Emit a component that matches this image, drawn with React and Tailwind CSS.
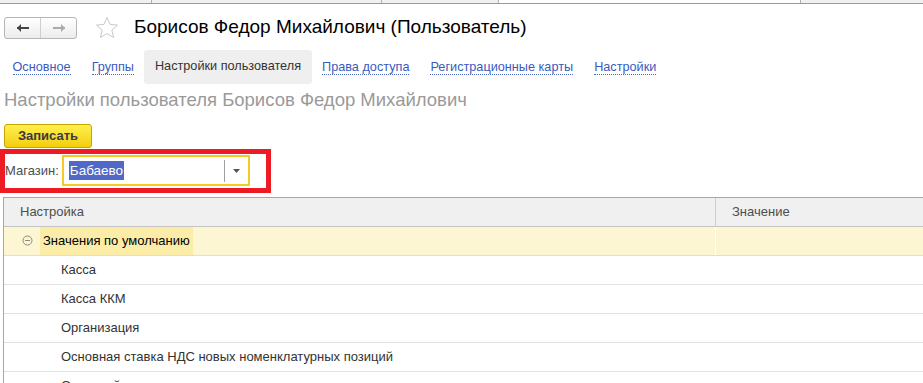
import { useState } from "react";

const tabs = [
  { label: "Основное" },
  { label: "Группы" },
  { label: "Настройки пользователя", active: true },
  { label: "Права доступа" },
  { label: "Регистрационные карты" },
  { label: "Настройки" },
];

const rows = ["Касса", "Касса ККМ", "Организация", "Основная ставка НДС новых номенклатурных позиций", "Основной склад"];

function NavButtons() {
  return (
    <div className="flex h-[22px] w-[73px] rounded-[3px] border border-[#b5b5b5] bg-gradient-to-b from-white to-[#ececec]">
      <button className="flex flex-1 items-center justify-center border-r border-[#cfcfcf]">
        <svg width="14" height="10" viewBox="0 0 14 10">
          <path d="M1 5h12" stroke="#444" strokeWidth="2" />
          <path d="M1 5l4-4v8z" fill="#444" />
        </svg>
      </button>
      <button className="flex flex-1 items-center justify-center">
        <svg width="14" height="10" viewBox="0 0 14 10">
          <path d="M1 5h12" stroke="#aaa" strokeWidth="2" />
          <path d="M13 5l-4-4v8z" fill="#aaa" />
        </svg>
      </button>
    </div>
  );
}

function Star() {
  return (
    <svg width="24" height="23" viewBox="0 0 24 23">
      <path
        d="M12 1.5l3.1 6.9 7.4.7-5.6 5 1.7 7.4L12 17.6l-6.6 3.9 1.7-7.4-5.6-5 7.4-.7z"
        fill="none"
        stroke="#c8c8c8"
        strokeWidth="1"
        strokeLinejoin="round"
      />
    </svg>
  );
}

function App() {
  const [store] = useState("Бабаево");

  return (
    <div className="h-[383px] w-[923px] overflow-hidden bg-white font-['Liberation_Sans',Arial,sans-serif]">
      {/* top strip */}
      <div className="flex h-[4px] border-b border-[#9a9a9a] bg-[#f0f0f0]">
        <div className="w-[152px] border-r border-[#b0b0b0]" />
        <div className="w-[230px] border-r border-[#b0b0b0]" />
        <div className="w-[117px] border-r border-[#b0b0b0]" />
        <div className="w-[302px] border-r border-[#b0b0b0] bg-white" />
        <div className="flex-1" />
      </div>

      {/* header */}
      <div className="flex h-[42px] items-center pl-[4px] pt-[5px]">
        <NavButtons />
        <div className="ml-[18px]">
          <Star />
        </div>
        <h1 className="ml-[15px] text-[19px] text-black">Борисов Федор Михайлович (Пользователь)</h1>
      </div>

      {/* tabs */}
      <div className="mt-[4px] flex h-[34px] items-stretch pl-[2px] text-[12.7px]">
        {tabs.map((t) =>
          t.active ? (
            <div key={t.label} className="flex items-center rounded-[3px] bg-[#efefef] px-[10.5px] text-[#333]">
              {t.label}
            </div>
          ) : (
            <div key={t.label} className="flex items-center px-[10.5px]">
              <span className="border-b border-dotted border-[#4a67c6] leading-[14px] text-[#3a5bbd]">{t.label}</span>
            </div>
          )
        )}
      </div>

      {/* subtitle */}
      <div className="mt-[5px] pl-[4px] text-[18.5px] leading-[21px] text-[#9a9a9a]">
        Настройки пользователя Борисов Федор Михайлович
      </div>

      {/* toolbar */}
      <div className="mt-[13px] pl-[4px]">
        <button className="h-[24px] w-[88px] rounded-[3px] border border-[#c7a600] bg-gradient-to-b from-[#fff04a] to-[#f3ce00] text-[13px] font-bold text-[#3a3a3a]">
          Записать
        </button>
      </div>

      {/* store selector */}
      <div className="mb-[4px] mt-[1px] flex h-[44px] w-[271px] items-center border-[5px] border-[#ed1c24]">
        <span className="text-[13px] text-[#4d4d4d]">Магазин:</span>
        <div className="ml-[3px] flex h-[31px] w-[188px] items-center border-2 border-[#f7c923] bg-white pl-[5px]">
          <span className="bg-[#5169c6] px-[1px] text-[13.5px] leading-[19px] text-white">{store}</span>
          <div className="ml-auto flex h-[22px] items-center border-l border-[#a0a0a0] px-[8px]">
            <svg width="7" height="4" viewBox="0 0 7 4">
              <path d="M0 0h7L3.5 4z" fill="#555" />
            </svg>
          </div>
        </div>
      </div>

      {/* table */}
      <div className="ml-[3px] border-l border-[#a8a8a8] text-[13px]">
        <div className="flex h-[30px] border-y border-[#c4c4c4] border-t-[#a8a8a8] bg-[#f0f0f0] text-[#4d4d4d]">
          <div className="flex w-[712px] items-center border-r border-[#cfcfcf] pl-[16px]">Настройка</div>
          <div className="flex flex-1 items-center pl-[16px]">Значение</div>
        </div>
        <div className="flex h-[29px] border-b border-[#dedede] bg-[#fcf6d3] text-black">
          <div className="flex w-[712px] items-center border-r border-white pl-[18px]">
            <svg width="11" height="11" viewBox="0 0 11 11" className="mr-[7px]">
              <circle cx="5.5" cy="5.5" r="4.5" fill="none" stroke="#8a8a8a" />
              <path d="M3 5.5h5" stroke="#8a8a8a" />
            </svg>
            <span className="flex h-full items-center bg-[#fbeda8] px-[3px]">Значения по умолчанию</span>
          </div>
          <div className="flex-1" />
        </div>
        {rows.map((r) => (
          <div key={r} className="flex h-[29px] items-center border-b border-[#e2e2e2] pl-[57px] text-[#333]">
            {r}
          </div>
        ))}
      </div>
    </div>
  );
}

export default App;
